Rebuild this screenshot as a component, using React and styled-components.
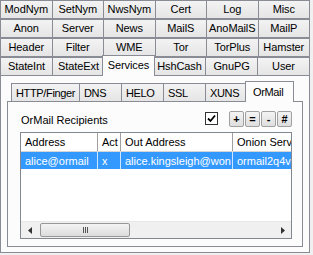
import styled, { createGlobalStyle } from "styled-components";

const GlobalStyle = createGlobalStyle`
  html, body {
    margin: 0;
    padding: 0;
    background: #f0f0f0;
    font-family: "Liberation Sans", Arial, sans-serif;
    font-size: 11px;
    color: #000;
  }
`;

const Window = styled.div`
  width: 313px;
  height: 255px;
  box-sizing: border-box;
  background: #f0f0f0;
  overflow: hidden;
`;

const Frame = styled.div`
  width: 310px;
  height: 253px;
  display: flex;
  flex-direction: column;
`;

const TabRows = styled.div`
  display: flex;
  flex-direction: column;
`;

const TabRow = styled.div`
  display: flex;
  height: 19px;
  align-items: flex-end;
`;

const Tab = styled.div`
  flex: 1;
  box-sizing: border-box;
  height: ${props => props.active ? "21px" : "19px"};
  margin: ${props => props.active ? "-2px -2px 0 -2px" : "0"};
  padding-top: ${props => props.active ? "3px" : "2px"};
  text-align: center;
  white-space: nowrap;
  letter-spacing: -0.1px;
  border: 1px solid #898c95;
  border-bottom: ${props => props.active ? "none" : "1px solid #898c95"};
  border-right: ${props => props.active ? "1px solid #898c95" : "none"};
  background: ${props => props.active
    ? "#fcfcfc"
    : "linear-gradient(#f3f3f3, #e5e5e5)"};
  position: relative;
  z-index: ${props => props.active ? 2 : 1};
  &:last-child {
    border-right: 1px solid #898c95;
  }
`;

const Panel = styled.div`
  flex: 1;
  box-sizing: border-box;
  margin-top: -1px;
  border: 1px solid #898c95;
  background: #fcfcfc;
  padding: 5px 6px 5px 6px;
  display: flex;
  flex-direction: column;
`;

const InnerTabRow = styled.div`
  display: flex;
  height: 21px;
  align-items: flex-end;
  padding-left: 4px;
  position: relative;
  z-index: 2;
`;

const InnerTab = styled.div`
  box-sizing: border-box;
  width: ${props => props.w}px;
  height: ${props => props.active ? "21px" : "19px"};
  margin: ${props => props.active ? "0 -2px 0 -2px" : "0"};
  padding: ${props => props.active ? "4px 0 0 7px" : "3px 0 0 4px"};
  border: 1px solid #898c95;
  border-bottom: ${props => props.active ? "none" : "1px solid #898c95"};
  border-right: ${props => props.active ? "1px solid #898c95" : "none"};
  background: ${props => props.active ? "#fcfcfc" : "linear-gradient(#f3f3f3, #e5e5e5)"};
  white-space: nowrap;
  letter-spacing: -0.35px;
  position: relative;
  z-index: ${props => props.active ? 2 : 1};
  &:last-child {
    border-right: 1px solid #898c95;
  }
`;

const InnerPanel = styled.div`
  flex: 1;
  box-sizing: border-box;
  margin-top: -1px;
  border: 1px solid #898c95;
  background: #fcfcfc;
  padding: 8px 10px 7px 12px;
  display: flex;
  flex-direction: column;
`;

const HeaderBar = styled.div`
  display: flex;
  align-items: center;
  height: 17px;
  margin-bottom: 5px;
`;

const GroupLabel = styled.div`
  flex: 1;
  padding-top: 3px;
  padding-left: 1px;
`;

const Check = styled.div`
  width: 11px;
  height: 11px;
  border: 1px solid #333;
  background: #fff;
  margin-right: 11px;
  display: flex;
  align-items: center;
  justify-content: center;
`;

const ButtonGroup = styled.div`
  display: flex;
  gap: 1px;
`;

const SmallButton = styled.div`
  width: 15px;
  height: 16px;
  box-sizing: border-box;
  border: 1px solid #a0a0a0;
  border-radius: 2px;
  background: linear-gradient(#f4f4f4, #dedede);
  display: flex;
  align-items: center;
  justify-content: center;
  font-weight: bold;
`;

const ListView = styled.div`
  flex: 1;
  box-sizing: border-box;
  border: 1px solid #828790;
  background: #fff;
  display: flex;
  flex-direction: column;
  overflow: hidden;
`;

const Row = styled.div`
  display: flex;
  height: ${props => props.header ? "18px" : "17px"};
  background: ${props => props.selected ? "#3399ff" : props.header ? "#fff" : "transparent"};
  color: ${props => props.selected ? "#fff" : "#000"};
  border-bottom: ${props => props.header ? "1px solid #d5d5d5" : "none"};
  white-space: nowrap;
`;

const Cell = styled.div`
  box-sizing: border-box;
  width: ${props => props.w}px;
  flex-shrink: 0;
  overflow: hidden;
  padding: 3px 0 0 4px;
  border-right: 1px solid ${props => props.header ? "#a0a0a0" : "#d0e6ff"};
  &:last-child {
    border-right: none;
  }
`;

const Spacer = styled.div`
  flex: 1;
`;

const ScrollBar = styled.div`
  height: 16px;
  display: flex;
  align-items: center;
  background: #f0f0f0;
  border-top: 1px solid #e8e8e8;
`;

const Arrow = styled.div`
  width: 17px;
  height: 16px;
  display: flex;
  align-items: center;
  justify-content: center;
`;

const Thumb = styled.div`
  width: ${props => props.w}px;
  height: 14px;
  box-sizing: border-box;
  margin-left: 2px;
  border: 1px solid #979797;
  border-radius: 2px;
  background: linear-gradient(#f3f3f3, #dcdcdc);
  display: flex;
  align-items: center;
  justify-content: center;
`;

const Grip = styled.div`
  display: flex;
  gap: 1px;
  span {
    width: 1px;
    height: 6px;
    background: #555;
  }
`;

const rows = [
  ["ModNym", "SetNym", "NwsNym", "Cert", "Log", "Misc"],
  ["Anon", "Server", "News", "MailS", "AnoMailS", "MailP"],
  ["Header", "Filter", "WME", "Tor", "TorPlus", "Hamster"],
  ["StateInt", "StateExt", "Services", "HshCash", "GnuPG", "User"],
];

const innerTabs = [
  { label: "HTTP/Finger", w: 68 },
  { label: "DNS", w: 42 },
  { label: "HELO", w: 42 },
  { label: "SSL", w: 42 },
  { label: "XUNS", w: 42 },
  { label: "OrMail", w: 49, active: true },
];

const columns = [
  { label: "Address", w: 77 },
  { label: "Act", w: 23 },
  { label: "Out Address", w: 112 },
  { label: "Onion Server", w: 80 },
];

const data = ["alice@ormail", "x", "alice.kingsleigh@won", "ormail2q4v4"];

export default function App() {
  return (
    <Window>
      <GlobalStyle />
      <Frame>
        <TabRows>
          {rows.map((row, i) => (
            <TabRow key={i}>
              {row.map(t => (
                <Tab key={t} active={t === "Services"}>{t}</Tab>
              ))}
            </TabRow>
          ))}
        </TabRows>
        <Panel>
          <InnerTabRow>
            {innerTabs.map(t => (
              <InnerTab key={t.label} w={t.w} active={t.active}>{t.label}</InnerTab>
            ))}
          </InnerTabRow>
          <InnerPanel>
            <HeaderBar>
              <GroupLabel>OrMail Recipients</GroupLabel>
              <Check>
                <svg width="9" height="9" viewBox="0 0 9 9">
                  <path d="M1 4.5 L3.5 7 L8 1.5" stroke="#000" strokeWidth="1.8" fill="none" />
                </svg>
              </Check>
              <ButtonGroup>
                {["+", "=", "-", "#"].map(b => (
                  <SmallButton key={b}>{b}</SmallButton>
                ))}
              </ButtonGroup>
            </HeaderBar>
            <ListView>
              <Row header>
                {columns.map(c => (
                  <Cell key={c.label} w={c.w} header>{c.label}</Cell>
                ))}
              </Row>
              <Row selected>
                {columns.map((c, i) => (
                  <Cell key={c.label} w={c.w}>{data[i]}</Cell>
                ))}
              </Row>
              <Spacer />
              <ScrollBar>
                <Arrow>
                  <svg width="4" height="7" viewBox="0 0 4 7"><path d="M4 0 L0 3.5 L4 7 Z" fill="#333" /></svg>
                </Arrow>
                <Thumb w={90}>
                  <Grip><span /><span /><span /></Grip>
                </Thumb>
                <Spacer />
                <Arrow>
                  <svg width="4" height="7" viewBox="0 0 4 7"><path d="M0 0 L4 3.5 L0 7 Z" fill="#333" /></svg>
                </Arrow>
              </ScrollBar>
            </ListView>
          </InnerPanel>
        </Panel>
      </Frame>
    </Window>
  );
}
